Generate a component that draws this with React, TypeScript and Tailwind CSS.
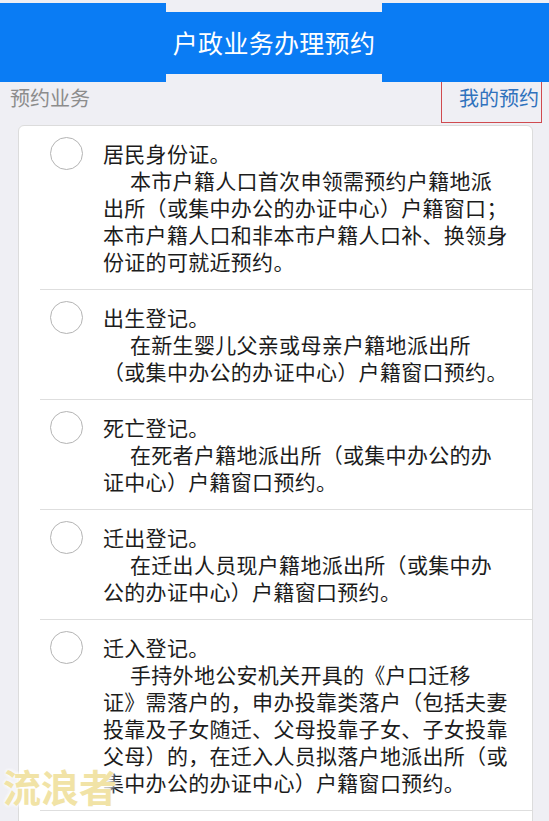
import React from "react";

const font = { fontFamily: '"Noto Sans CJK SC", "Noto Sans", sans-serif' };

type Item = { title: string; lines: string[] };

const items: Item[] = [
  {
    title: "居民身份证。",
    lines: [
      "本市户籍人口首次申领需预约户籍地派",
      "出所（或集中办公的办证中心）户籍窗口；",
      "本市户籍人口和非本市户籍人口补、换领身",
      "份证的可就近预约。",
    ],
  },
  {
    title: "出生登记。",
    lines: ["在新生婴儿父亲或母亲户籍地派出所", "（或集中办公的办证中心）户籍窗口预约。"],
  },
  {
    title: "死亡登记。",
    lines: ["在死者户籍地派出所（或集中办公的办", "证中心）户籍窗口预约。"],
  },
  {
    title: "迁出登记。",
    lines: ["在迁出人员现户籍地派出所（或集中办", "公的办证中心）户籍窗口预约。"],
  },
  {
    title: "迁入登记。",
    lines: [
      "手持外地公安机关开具的《户口迁移",
      "证》需落户的，申办投靠类落户（包括夫妻",
      "投靠及子女随迁、父母投靠子女、子女投靠",
      "父母）的，在迁入人员拟落户地派出所（或",
      "集中办公的办证中心）户籍窗口预约。",
    ],
  },
];

export default function App() {
  return (
    <div className="relative w-[549px] min-h-[821px] bg-[#efeff4] overflow-hidden" style={font}>
      {/* Header */}
      <div className="flex items-center pt-[3px]">
        <div className="w-[166px] h-[79px] bg-[#0a7cf4]" />
        <div className="w-[216px] h-[62px] bg-[#0a7cf4] flex items-center justify-center text-white text-[25px] leading-none tracking-[0.3px]">
          户政业务办理预约
        </div>
        <div className="flex-1 h-[79px] bg-[#0a7cf4]" />
      </div>

      {/* Sub header row */}
      <div className="flex justify-between h-[43px]">
        <div className="pl-[10px] pt-[6px] text-[20px] leading-[20px] text-[#8c8c8c]">预约业务</div>
        <div className="mr-[7px] w-[101px] h-[41px] border-x-[1.5px] border-b-[1.5px] border-[#d04a4f] pt-[6px] pr-[2px] text-right text-[20px] leading-[20px] text-[#2f72bd]">
          我的预约
        </div>
      </div>

      {/* Card */}
      <div className="ml-[18px] w-[515px] bg-white border border-[#dcdcdc] rounded-t-[6px]">
        {items.map((it, i) => (
          <div
            key={i}
            className={`ml-[21px] flex pt-[11px] pb-[14px] border-[#dedede] ${i === 0 ? "" : "border-t"} ${
              i === items.length - 1 ? "border-b" : ""
            }`}
          >
            <div className="ml-[10px] w-[33px] h-[33px] shrink-0 rounded-full border-[1.5px] border-[#b4b4b4]" />
            <div className="ml-[20px] mt-[3px] text-[21px] leading-[27px] tracking-[0.3px] text-[#1c1c1c] whitespace-nowrap">
              <div>{it.title}</div>
              <div className="indent-[27px]">
                {it.lines.map((l, j) => (
                  <React.Fragment key={j}>
                    {l}
                    {j < it.lines.length - 1 && <br />}
                  </React.Fragment>
                ))}
              </div>
            </div>
          </div>
        ))}
        <div className="h-[20px]" />
      </div>

      {/* Watermark */}
      <div
        className="absolute left-[3px] top-[764px] text-[38px] leading-[44px] font-bold text-[#f1e3a6]"
        style={{ textShadow: "0 0 4px #fff, 0 0 4px #fff" }}
      >
        流浪者
      </div>
    </div>
  );
}
